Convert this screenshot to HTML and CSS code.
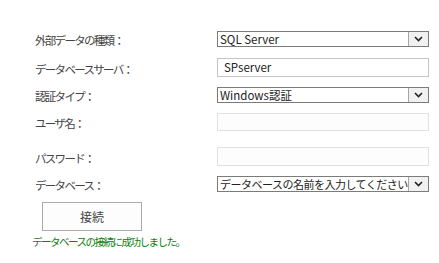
FILE: index.html
```html
<!DOCTYPE html>
<html lang="ja">
<head>
    <meta charset="UTF-8">
    <title>外部データ接続</title>
    <link rel="stylesheet" href="styles.css">
</head>
<body>
    <div class="form">
        <div class="row r1">
            <div class="label">外部データの種類：</div>
            <div class="select"><span class="value">SQL Server</span><span class="arrow"><svg width="9" height="6" viewBox="0 0 9 6"><path d="M1 1 L4.5 4.5 L8 1" fill="none" stroke="#222" stroke-width="1.6"/></svg></span></div>
        </div>
        <div class="row r2">
            <div class="label">データベースサーバ：</div>
            <div class="input">SPserver</div>
        </div>
        <div class="row r3">
            <div class="label">認証タイプ：</div>
            <div class="select"><span class="value">Windows認証</span><span class="arrow"><svg width="9" height="6" viewBox="0 0 9 6"><path d="M1 1 L4.5 4.5 L8 1" fill="none" stroke="#222" stroke-width="1.6"/></svg></span></div>
        </div>
        <div class="row r4">
            <div class="label">ユーザ名：</div>
            <div class="input disabled"></div>
        </div>
        <div class="row r5">
            <div class="label">パスワード：</div>
            <div class="input disabled"></div>
        </div>
        <div class="row r6">
            <div class="label">データベース：</div>
            <div class="select"><span class="value jp">データベースの名前を入力してください</span><span class="arrow"><svg width="9" height="6" viewBox="0 0 9 6"><path d="M1 1 L4.5 4.5 L8 1" fill="none" stroke="#222" stroke-width="1.6"/></svg></span></div>
        </div>
        <div class="button">接続</div>
        <div class="message">データベースの接続に成功しました。</div>
    </div>
</body>
</html>
```

FILE: styles.css
```css
body {
    margin: 0;
    background: #fff;
    font-family: "Noto Sans CJK JP", "Liberation Sans", sans-serif;
    font-size: 12px;
    color: #444;
}
.form {
    padding-top: 31px;
}
.row {
    display: grid;
    grid-template-columns: 182px 212px;
    align-items: center;
    padding-left: 35px;
}
.r2 { margin-top: 11px; }
.r3 { margin-top: 10px; }
.r4 { margin-top: 10px; }
.r5 { margin-top: 16px; }
.r6 { margin-top: 10px; }
.label {
    font-size: 11.5px;
    letter-spacing: -1.7px;
    line-height: 14px;
    padding-top: 2px;
    white-space: nowrap;
}
.select {
    display: flex;
    height: 16px;
    box-sizing: border-box;
    border: 1px solid #7b7b7b;
    background: #fff;
    color: #222;
    overflow: hidden;
}
.select .value {
    flex: 1;
    padding-left: 2px;
    line-height: 14px;
    font-size: 11.5px;
    white-space: nowrap;
    overflow: hidden;
}
.select .value.jp {
    font-size: 11px;
    letter-spacing: -0.5px;
}
.select .arrow {
    width: 19px;
    flex: none;
    display: flex;
    align-items: center;
    justify-content: center;
    border-left: 1px solid #a6a6a6;
    background: #f1f1f1;
}
.input {
    height: 19px;
    box-sizing: border-box;
    border: 1px solid #c4c4c4;
    padding-left: 6px;
    line-height: 17px;
    font-size: 11.5px;
    color: #222;
}
.input.disabled {
    border-color: #e1e1e1;
    background: #fdfdfd;
}
.r4 .input {
    height: 18px;
}
.button {
    width: 100px;
    height: 29px;
    box-sizing: border-box;
    margin: 10px 0 0 42px;
    border: 1px solid #ababab;
    background: #fdfdfd;
    text-align: center;
    line-height: 27px;
    font-size: 12px;
    color: #444;
}
.message {
    margin: 4px 0 0 32px;
    color: #0d800d;
    font-size: 10.5px;
    letter-spacing: -1.5px;
    line-height: 13px;
}
```
